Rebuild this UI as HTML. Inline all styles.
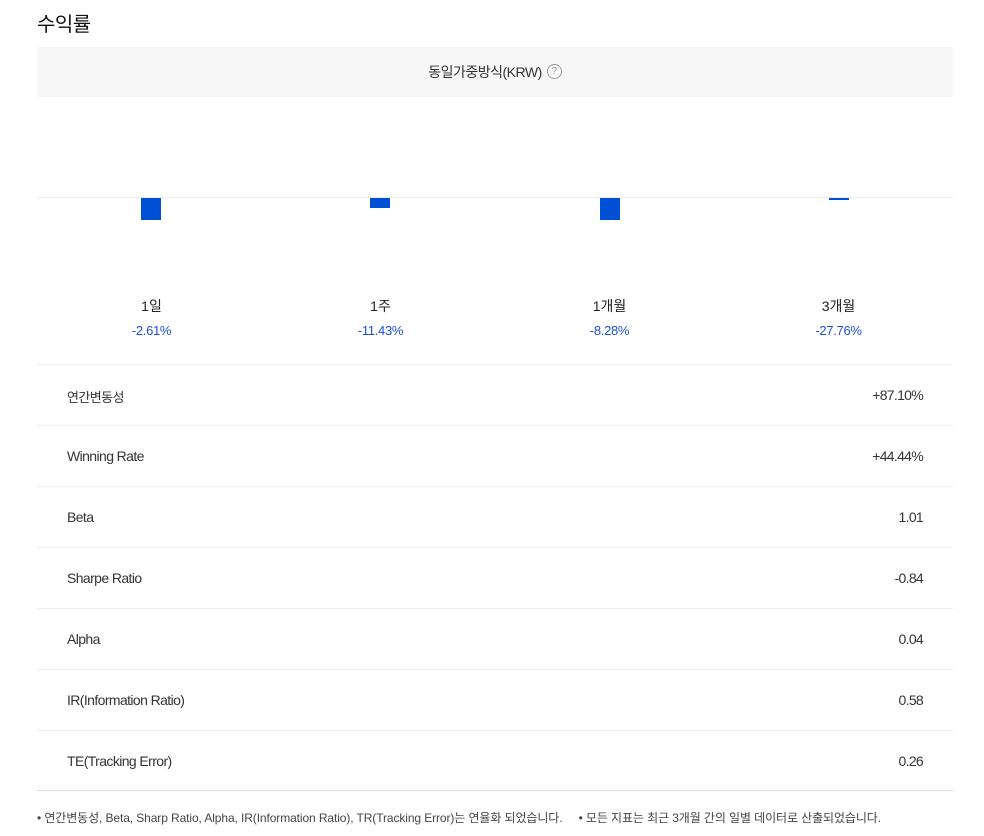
<!DOCTYPE html>
<html><head><meta charset="utf-8">
<style>
*{margin:0;padding:0;box-sizing:border-box}
body{width:984px;height:836px;background:#fff;font-family:"Liberation Sans","Noto Sans CJK KR",sans-serif;color:#222;position:relative;overflow:hidden}
.abs{position:absolute}
.title{left:37px;top:8px;font-size:20px;color:#111;letter-spacing:-0.5px}
.box{left:37px;top:47px;width:916px;height:50px;background:#f7f7f7;text-align:center;line-height:50px;font-size:14px;color:#333;letter-spacing:-0.5px}
.q{display:inline-block;width:15px;height:15px;border:1px solid #999;border-radius:50%;font-size:10px;line-height:13px;color:#999;vertical-align:middle;margin-left:5px;margin-top:-3px;letter-spacing:0}
.base{left:37px;top:197px;width:916px;height:1px;background:#eee}
.bar{background:#0050d6;width:20px;top:198px}
.lab{width:229px;text-align:center;font-size:14px;color:#222;top:296px}
.val{width:229px;text-align:center;font-size:13px;color:#1d4fd8;top:323px;letter-spacing:-0.3px}
.row{left:37px;width:916px;height:61px;border-top:1px solid #eee;font-size:14px;color:#333}
.row span{position:absolute;top:22px;letter-spacing:-0.6px}
.row .l{left:30px}
.row .r{right:30px;letter-spacing:-0.7px}
.foot{left:37px;top:809px;font-size:12px;color:#444;letter-spacing:-0.1px;white-space:nowrap}
</style></head><body>
<div class="abs title">수익률</div>
<div class="abs box">동일가중방식(KRW)<span class="q">?</span></div>
<div class="abs base"></div>
<div class="abs bar" style="left:141px;height:22px"></div>
<div class="abs bar" style="left:370px;height:10px"></div>
<div class="abs bar" style="left:600px;height:22px"></div>
<div class="abs bar" style="left:829px;height:2px"></div>

<div class="abs lab" style="left:37px">1일</div>
<div class="abs lab" style="left:266px">1주</div>
<div class="abs lab" style="left:495px">1개월</div>
<div class="abs lab" style="left:724px">3개월</div>
<div class="abs val" style="left:37px">-2.61%</div>
<div class="abs val" style="left:266px">-11.43%</div>
<div class="abs val" style="left:495px">-8.28%</div>
<div class="abs val" style="left:724px">-27.76%</div>

<div class="abs row" style="top:364px"><span class="l" style="font-size:13px">연간변동성</span><span class="r">+87.10%</span></div>
<div class="abs row" style="top:425px"><span class="l">Winning Rate</span><span class="r">+44.44%</span></div>
<div class="abs row" style="top:486px"><span class="l">Beta</span><span class="r">1.01</span></div>
<div class="abs row" style="top:547px"><span class="l">Sharpe Ratio</span><span class="r">-0.84</span></div>
<div class="abs row" style="top:608px"><span class="l">Alpha</span><span class="r">0.04</span></div>
<div class="abs row" style="top:669px"><span class="l">IR(Information Ratio)</span><span class="r">0.58</span></div>
<div class="abs row" style="top:730px;border-bottom:1px solid #ddd"><span class="l">TE(Tracking Error)</span><span class="r">0.26</span></div>

<div class="abs foot">• 연간변동성, Beta, Sharp Ratio, Alpha, IR(Information Ratio), TR(Tracking Error)는 연율화 되었습니다. &nbsp;&nbsp;&nbsp; • 모든 지표는 최근 3개월 간의 일별 데이터로 산출되었습니다.</div>
</body></html>
